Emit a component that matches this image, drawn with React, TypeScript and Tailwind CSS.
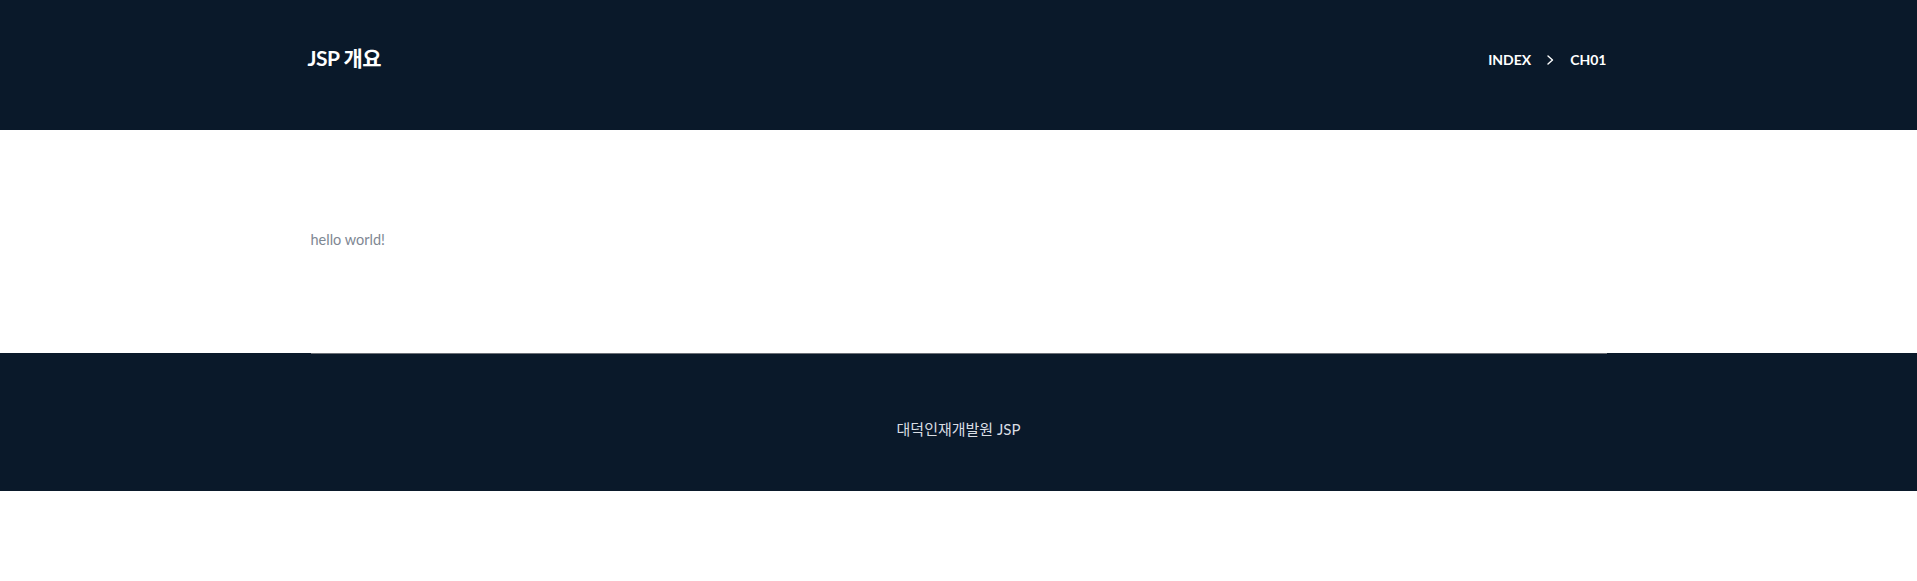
const FONT = "font-['Lato','Noto_Sans_CJK_KR',sans-serif]";

export default function App() {
  return (
    <div className={`min-h-screen bg-white ${FONT}`}>
      {/* Header */}
      <header className="bg-[#0a192a] h-[130px]">
        <div className="max-w-[1296px] mx-auto h-full flex items-center justify-between pb-[14px]">
          <h1 className="text-white text-[21px] font-bold tracking-tight -ml-[3px]">JSP 개요</h1>
          <nav className="flex items-center gap-[16px] text-white text-[14px] font-bold pt-[2px]">
            <span>INDEX</span>
            <svg width="7" height="10" viewBox="0 0 7 10" fill="none" className="mt-[1px]">
              <polyline points="1,1 5.5,5 1,9" stroke="white" strokeWidth="1.4" strokeLinecap="round" strokeLinejoin="round" />
            </svg>
            <span>CH01</span>
          </nav>
        </div>
      </header>

      {/* Main */}
      <main className="h-[223px]">
        <div className="max-w-[1296px] mx-auto pt-[99px]">
          <p className="text-[#7e8793] text-[14.5px] leading-[22px]">hello world!</p>
        </div>
      </main>

      {/* Footer */}
      <footer className="bg-[#0a192a] h-[138px]">
        <div className="max-w-[1296px] mx-auto h-full border-t border-[#6b6f76] flex justify-center pt-[63px]">
          <p className="text-[#d9dde3] text-[15px] leading-[24px]">대덕인재개발원 JSP</p>
        </div>
      </footer>
    </div>
  );
}
